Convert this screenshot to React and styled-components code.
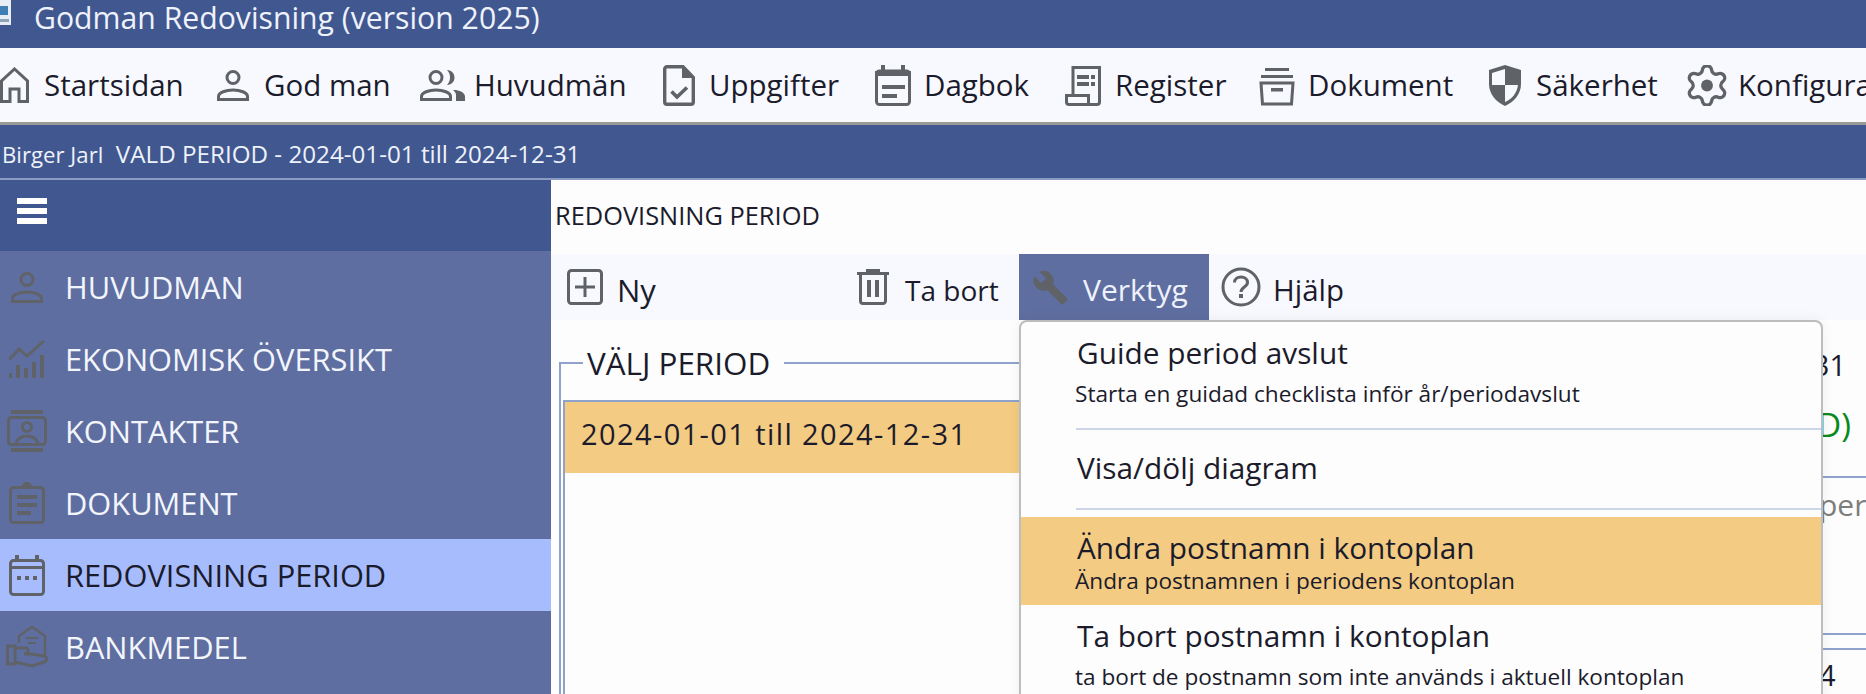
import React from "react";
import styled, { createGlobalStyle } from "styled-components";

const GlobalStyle = createGlobalStyle`
  html, body {
    margin: 0;
    padding: 0;
    background: #fdfdfd;
    overflow: hidden;
  }
  * { box-sizing: border-box; }
`;

const Page = styled.div`
  width: 1866px;
  height: 694px;
  overflow: hidden;
  font-family: "Open Sans", "Liberation Sans", sans-serif;
  color: #1b1b2b;
`;

const TitleBar = styled.div`
  height: 48px;
  background: #41578f;
  color: #eef2fb;
  display: flex;
  align-items: flex-start;
  font-size: 30.2px;
  line-height: 36px;
  white-space: nowrap;
`;

const AppLogo = styled.svg`
  width: 11px;
  height: 25px;
  margin-right: 23px;
  flex: none;
`;

const Toolbar = styled.nav`
  height: 77px;
  background: #f8f9ff;
  border-bottom: 3px solid #9a9a98;
  display: grid;
  grid-template-columns: 217px 203px 243px 212px 190px 194px 230px 198px 200px;
  align-items: center;
  overflow: hidden;
`;

const ToolItem = styled.div`
  display: flex;
  align-items: center;
  gap: ${(p) => p.$gap}px;
  font-size: 29.5px;
  white-space: nowrap;
  svg { flex: none; }
`;

const ToolLabel = styled.span`
  margin-top: -2px;
`;

const Banner = styled.div`
  height: 55px;
  background: #41578f;
  border-bottom: 2px solid #8a9cc4;
  color: #eef2fb;
  font-size: 24.2px;
  line-height: 57px;
  padding-left: 2px;
  white-space: pre;
`;

const BannerName = styled.span`
  font-size: 22.2px;
`;

const Body = styled.div`
  display: flex;
  height: 514px;
`;

const Sidebar = styled.aside`
  width: 551px;
  flex: none;
  background: #5f6ea0;
`;

const SideHead = styled.div`
  height: 71px;
  background: #41578f;
  padding: 18px 0 0 17px;
`;

const Burger = styled.div`
  width: 30px;
  display: grid;
  gap: 4px;
  span {
    display: block;
    height: 6px;
    background: #fff;
  }
`;

const SideItem = styled.div`
  height: 72px;
  display: grid;
  grid-template-columns: 54px 1fr;
  column-gap: 11px;
  align-items: center;
  justify-items: start;
  font-size: 30.8px;
  line-height: 68px;
  background: ${(p) => (p.$active ? "#a7bcfd" : "transparent")};
  color: ${(p) => (p.$active ? "#1b1b2b" : "#f2f5fc")};
  svg { justify-self: center; }
`;

const Main = styled.main`
  flex: 1;
  min-width: 0;
  background: #fdfdfd;
`;

const MainTitle = styled.div`
  height: 74px;
  padding-left: 4px;
  font-size: 25.4px;
  line-height: 70px;
`;

const ActionBar = styled.div`
  height: 66px;
  background: #f8f9ff;
  display: flex;
  align-items: stretch;
  padding-left: 16px;
`;

const ActionButton = styled.div`
  position: relative;
  width: ${(p) => p.$width}px;
  margin-left: ${(p) => p.$offset || 0}px;
  padding-left: ${(p) => p.$pad || 0}px;
  display: flex;
  align-items: center;
  gap: ${(p) => p.$gap}px;
  font-size: ${(p) => p.$size}px;
  white-space: nowrap;
  background: ${(p) => (p.$open ? "#5f6ea0" : "transparent")};
  color: ${(p) => (p.$open ? "#eef2fb" : "#1b1b2b")};
`;

const ActionLabel = styled.span`
  margin-top: 5px;
`;

const Content = styled.div`
  height: 374px;
  display: flex;
  justify-content: space-between;
  overflow: hidden;
`;

const PeriodField = styled.fieldset`
  width: 1040px;
  height: 420px;
  margin: 24px 0 0 8px;
  padding: 0 0 0 2px;
  border: 2px solid #8fa2cc;
  border-bottom: none;
  border-right: none;
  min-width: 0;
`;

const PeriodLegend = styled.legend`
  margin-left: 20px;
  padding: 0 14px 0 4px;
  font-size: 31.4px;
  line-height: 38px;
`;

const PeriodList = styled.div`
  margin-top: 18px;
  height: 300px;
  border: 2px solid #8fa2cc;
  border-bottom: none;
  border-right: none;
`;

const PeriodRow = styled.div`
  height: 71px;
  background: #f3cb82;
  padding-left: 16px;
  font-size: 29px;
  letter-spacing: 1.4px;
  line-height: 64px;
  white-space: nowrap;
`;

const SidePanel = styled.div`
  width: 160px;
  flex: none;
  padding-top: 24px;
`;

const PanelText = styled.div`
  height: ${(p) => p.$height}px;
  display: flex;
  align-items: center;
  justify-content: ${(p) => (p.$left ? "flex-start" : "flex-end")};
  padding: ${(p) => (p.$left ? "0 0 0 113px" : `0 ${p.$right || 20}px 0 0`)};
  font-size: ${(p) => p.$size || 29}px;
  white-space: nowrap;
  color: ${(p) => p.$color || "#1b1b2b"};
`;

const PanelLine = styled.div`
  height: 2px;
  margin-top: ${(p) => p.$top}px;
  background: #8fa2cc;
`;

const Menu = styled.div`
  position: absolute;
  top: 100%;
  left: 0;
  width: 804px;
  height: 400px;
  background: #fdfdfd;
  border: 2.5px solid #bdbdbd;
  border-radius: 8px 8px 0 0;
  box-shadow: 0 0 14px rgba(0, 0, 0, 0.06);
  color: #1b1b2b;
  z-index: 5;
`;

const MenuItem = styled.div`
  height: ${(p) => p.$height}px;
  margin-top: ${(p) => p.$gap || 0}px;
  padding: ${(p) => p.$top}px 0 0 56px;
  background: ${(p) => (p.$active ? "#f3cb82" : "transparent")};
  white-space: nowrap;
`;

const MenuTitle = styled.div`
  font-size: 29.8px;
  line-height: 38px;
`;

const MenuSub = styled.div`
  margin: ${(p) => (p.$tight ? "0" : "6px")} 0 0 -2px;
  font-size: 22.6px;
  line-height: ${(p) => (p.$tight ? "28px" : "32px")};
`;

const MenuRule = styled.div`
  height: 2px;
  margin-left: 55px;
  background: #cdd6e9;
`;

const G = "#5f6368";

const line = { fill: "none", stroke: G, strokeWidth: 3 };

const HomeIcon = () => (
  <svg width="29" height="36" viewBox="0 0 29 36">
    <path {...line} d="M1.5 34.5V14L14.5 2 27.5 14V34.5H19V22H10V34.5Z" />
  </svg>
);

const UserIcon = () => (
  <svg width="32" height="32" viewBox="0 0 32 32">
    <circle {...line} cx="16" cy="8.5" r="6" />
    <path {...line} d="M1.5 30.5V27.5C1.5 23.5 9 21 16 21S30.5 23.5 30.5 27.5V30.5Z" />
  </svg>
);

const UsersIcon = () => (
  <svg width="45" height="32" viewBox="0 0 45 32">
    <circle {...line} cx="16" cy="8.5" r="6" />
    <path {...line} d="M1.5 30.5V27.5C1.5 23.5 9 21 16 21S30.5 23.5 30.5 27.5V30.5Z" />
    <path fill={G} d="M27 1C32 1 34.5 5 34.5 8.5S32 16 27 16C29.5 13 30 11 30 8.5S29.5 3.5 27 1Z" />
    <path fill={G} d="M36 21C41 22 45 24 45 27.5V32H36V26C36 24.5 35 22.5 33 21Z" />
  </svg>
);

const TaskIcon = () => (
  <svg width="32" height="41" viewBox="0 0 32 41">
    <path {...line} strokeWidth="3.4" d="M4 1.7H20L30.3 12.5V37A2.3 2.3 0 0 1 28 39.3H4A2.3 2.3 0 0 1 1.7 37V4A2.3 2.3 0 0 1 4 1.7Z" />
    <path fill={G} d="M19 2L31 13H19Z" />
    <path {...line} strokeWidth="3.6" d="M8.5 26.5L14 32 24 22.5" />
  </svg>
);

const DiaryIcon = () => (
  <svg width="36" height="41" viewBox="0 0 36 41">
    <path fill={G} d="M6 0H10V6H26V0H30V6H36V11H0V6H6Z" />
    <rect {...line} x="1.5" y="6" width="33" height="33.5" rx="3" />
    <rect fill={G} x="7" y="20" width="23" height="4" />
    <rect fill={G} x="7" y="29" width="15" height="4" />
  </svg>
);

const RegisterIcon = () => (
  <svg width="36" height="41" viewBox="0 0 36 41">
    <path {...line} d="M8 30V2.5H34.5V37A2.5 2.5 0 0 1 32 39.5H24" />
    <path {...line} d="M1.5 30.5H23.5V39.5H4A2.5 2.5 0 0 1 1.5 37Z" />
    <rect fill={G} x="12" y="10" width="12" height="4" />
    <rect fill={G} x="12" y="17" width="12" height="4" />
    <rect fill={G} x="26" y="10" width="4" height="4" />
    <rect fill={G} x="26" y="17" width="4" height="4" />
  </svg>
);

const ArchiveIcon = () => (
  <svg width="36" height="41" viewBox="0 0 36 41">
    <rect fill={G} x="6" y="3" width="24" height="3" />
    <rect fill={G} x="2" y="10" width="32" height="3" />
    <path {...line} d="M2 18H34L32.5 39H3.5Z" />
    <rect fill={G} x="12" y="23" width="12" height="3.5" />
  </svg>
);

const ShieldIcon = () => (
  <svg width="32" height="41" viewBox="0 0 32 41">
    <path fill={G} d="M16 0L32 5V19C32 29 25 37 16 41 7 37 0 29 0 19V5Z" />
    <path fill="#f8f9ff" d="M16 4L3 8V20H16Z" />
    <path fill="#f8f9ff" d="M16 20H29C28 28 23 34 16 37Z" />
  </svg>
);

const GearIcon = () => (
  <svg width="40" height="41" viewBox="2.4 1.6 19.2 20.8">
    <path
      fill="none"
      stroke={G}
      strokeWidth="1.7"
      d="M9.671 4.136a2.34 2.34 0 0 1 4.659 0 2.34 2.34 0 0 0 3.319 1.915 2.34 2.34 0 0 1 2.33 4.033 2.34 2.34 0 0 0 0 3.831 2.34 2.34 0 0 1-2.33 4.033 2.34 2.34 0 0 0-3.319 1.915 2.34 2.34 0 0 1-4.659 0 2.34 2.34 0 0 0-3.32-1.915 2.34 2.34 0 0 1-2.33-4.033 2.34 2.34 0 0 0 0-3.831A2.34 2.34 0 0 1 6.35 6.051a2.34 2.34 0 0 0 3.32-1.915"
    />
    <circle fill={G} cx="12" cy="12" r="3" />
  </svg>
);

const ChartIcon = () => (
  <svg width="36" height="38" viewBox="0 0 36 38">
    <path {...line} d="M0 20L10 9 18 16 35 1" />
    <rect fill={G} x="0" y="33" width="3" height="5" />
    <rect fill={G} x="7" y="25" width="4" height="13" />
    <rect fill={G} x="15" y="28" width="4" height="10" />
    <rect fill={G} x="23" y="22" width="4" height="16" />
    <rect fill={G} x="31" y="15" width="4" height="23" />
  </svg>
);

const ContactIcon = () => (
  <svg width="40" height="42" viewBox="0 0 40 42">
    <rect fill={G} x="4" y="0" width="32" height="4" />
    <rect fill={G} x="4" y="38" width="32" height="4" />
    <rect {...line} x="1.5" y="7.5" width="37" height="27" rx="3" />
    <circle {...line} cx="20" cy="17" r="4.5" />
    <path {...line} d="M9 33C11 28 15 26 20 26S29 28 31 33" />
  </svg>
);

const ClipIcon = () => (
  <svg width="36" height="42" viewBox="0 0 36 42">
    <rect {...line} x="1.5" y="5.5" width="33" height="35" rx="3" />
    <path fill={G} d="M13 6C13 2 15 0 18 0S23 2 23 6Z" />
    <rect fill={G} x="8" y="13" width="20" height="4" />
    <rect fill={G} x="8" y="21" width="20" height="4" />
    <rect fill={G} x="8" y="29" width="14" height="4" />
  </svg>
);

const CalendarIcon = () => (
  <svg width="36" height="41" viewBox="0 0 36 41">
    <rect fill={G} x="6" y="0" width="4" height="6" />
    <rect fill={G} x="26" y="0" width="4" height="6" />
    <rect {...line} x="1.5" y="5.5" width="33" height="34" rx="3" />
    <rect fill={G} x="1.5" y="11" width="33" height="3" />
    <rect fill={G} x="8" y="21" width="4" height="4" />
    <rect fill={G} x="16" y="21" width="4" height="4" />
    <rect fill={G} x="24" y="21" width="4" height="4" />
  </svg>
);

const HandIcon = () => (
  <svg width="42" height="42" viewBox="0 0 42 42">
    <path fill="none" stroke={G} strokeWidth="2.5" d="M13 17V10L26 1 39 10V30" />
    <rect fill={G} x="20" y="11" width="12" height="2" />
    <rect fill={G} x="22" y="16" width="8" height="2" />
    <path {...line} d="M1.5 20H9V38H1.5Z" />
    <path {...line} d="M9 22H20C23 22 23 28 18 28H25L38 30C42 32 41 35 38 36L26 40 9 36" />
  </svg>
);

const PlusIcon = () => (
  <svg width="36" height="36" viewBox="0 0 36 36">
    <rect {...line} x="1.5" y="1.5" width="33" height="33" rx="3" />
    <path {...line} d="M18 8V28M8 18H28" />
  </svg>
);

const TrashIcon = () => (
  <svg width="32" height="36" viewBox="0 0 32 36">
    <rect fill={G} x="0" y="3" width="32" height="3" />
    <rect fill={G} x="9" y="0" width="14" height="3" />
    <path {...line} d="M3.5 5V32A2.5 2.5 0 0 0 6 34.5H26A2.5 2.5 0 0 0 28.5 32V5" />
    <rect fill={G} x="10" y="11" width="4" height="17" />
    <rect fill={G} x="18" y="11" width="4" height="17" />
  </svg>
);

const WrenchIcon = () => (
  <svg width="37" height="37" viewBox="0 0 24 24">
    <path
      fill={G}
      d="M22.7 19l-9.1-9.1c.9-2.3.4-5-1.5-6.9-2-2-5-2.4-7.4-1.3L9 6 6 9 1.6 4.7C.4 7.1.9 10.1 2.9 12.1c1.9 1.9 4.6 2.4 6.9 1.5l9.1 9.1c.4.4 1 .4 1.4 0l2.3-2.3c.5-.4.5-1.1.1-1.4z"
    />
  </svg>
);

const HelpIcon = () => (
  <svg width="40" height="40" viewBox="0 0 40 40">
    <circle {...line} cx="20" cy="20" r="18" />
    <path {...line} d="M13.5 15.5C13.5 12 16.5 10 20 10S26.5 12 26.5 15.5C26.5 20 20 20 20 25" />
    <rect fill={G} x="18" y="27" width="4" height="4" />
  </svg>
);

const toolItems = [
  { label: "Startsidan", icon: <HomeIcon />, gap: 15 },
  { label: "God man", icon: <UserIcon />, gap: 15 },
  { label: "Huvudmän", icon: <UsersIcon />, gap: 9 },
  { label: "Uppgifter", icon: <TaskIcon />, gap: 14 },
  { label: "Dagbok", icon: <DiaryIcon />, gap: 13 },
  { label: "Register", icon: <RegisterIcon />, gap: 14 },
  { label: "Dokument", icon: <ArchiveIcon />, gap: 13 },
  { label: "Säkerhet", icon: <ShieldIcon />, gap: 15 },
  { label: "Konfiguration", icon: <GearIcon />, gap: 11 },
];

const sideItems = [
  { label: "HUVUDMAN", icon: <UserIcon /> },
  { label: "EKONOMISK ÖVERSIKT", icon: <ChartIcon /> },
  { label: "KONTAKTER", icon: <ContactIcon /> },
  { label: "DOKUMENT", icon: <ClipIcon /> },
  { label: "REDOVISNING PERIOD", icon: <CalendarIcon />, active: true },
  { label: "BANKMEDEL", icon: <HandIcon /> },
];

const App = () => {
  return (
    <Page>
      <GlobalStyle />
      <TitleBar>
        <AppLogo viewBox="0 0 11 25">
          <rect width="11" height="25" fill="#e8edf3" />
          <rect x="0" y="6" width="8" height="9" fill="#3f7fb5" />
          <rect x="0" y="19" width="9" height="3" fill="#8fa4b8" />
        </AppLogo>
        Godman Redovisning (version 2025)
      </TitleBar>

      <Toolbar>
        {toolItems.map((item) => (
          <ToolItem key={item.label} $gap={item.gap}>
            {item.icon}
            <ToolLabel>{item.label}</ToolLabel>
          </ToolItem>
        ))}
      </Toolbar>

      <Banner>
        <BannerName>Birger Jarl</BannerName>  VALD PERIOD - 2024-01-01 till 2024-12-31
      </Banner>

      <Body>
        <Sidebar>
          <SideHead>
            <Burger>
              <span />
              <span />
              <span />
            </Burger>
          </SideHead>
          {sideItems.map((item) => (
            <SideItem key={item.label} $active={item.active}>
              {item.icon}
              {item.label}
            </SideItem>
          ))}
        </Sidebar>

        <Main>
          <MainTitle>REDOVISNING PERIOD</MainTitle>
          <ActionBar>
            <ActionButton $width={290} $gap={14} $size={31}>
              <PlusIcon />
              <ActionLabel>Ny</ActionLabel>
            </ActionButton>
            <ActionButton $width={162} $gap={16} $size={28}>
              <TrashIcon />
              <ActionLabel>Ta bort</ActionLabel>
            </ActionButton>
            <ActionButton $width={190} $pad={13} $gap={14} $size={30} $open>
              <WrenchIcon />
              <ActionLabel>Verktyg</ActionLabel>
              <Menu>
                <MenuItem $height={106} $top={12}>
                  <MenuTitle>Guide period avslut</MenuTitle>
                  <MenuSub>Starta en guidad checklista inför år/periodavslut</MenuSub>
                </MenuItem>
                <MenuRule />
                <MenuItem $height={78} $top={19}>
                  <MenuTitle>Visa/dölj diagram</MenuTitle>
                </MenuItem>
                <MenuRule />
                <MenuItem $height={88} $top={12} $gap={7} $active>
                  <MenuTitle>Ändra postnamn i kontoplan</MenuTitle>
                  <MenuSub $tight>Ändra postnamnen i periodens kontoplan</MenuSub>
                </MenuItem>
                <MenuItem $height={100} $top={12}>
                  <MenuTitle>Ta bort postnamn i kontoplan</MenuTitle>
                  <MenuSub>ta bort de postnamn som inte används i aktuell kontoplan</MenuSub>
                </MenuItem>
              </Menu>
            </ActionButton>
            <ActionButton $width={140} $offset={12} $gap={12} $size={29.5}>
              <HelpIcon />
              <ActionLabel>Hjälp</ActionLabel>
            </ActionButton>
          </ActionBar>

          <Content>
            <PeriodField>
              <PeriodLegend>VÄLJ PERIOD</PeriodLegend>
              <PeriodList>
                <PeriodRow>2024-01-01 till 2024-12-31</PeriodRow>
              </PeriodList>
            </PeriodField>

            <SidePanel>
              <PanelText $height={40}>2024-12-31</PanelText>
              <PanelText $height={80} $size={33} $right={15} $color="#0a8a1a">D)</PanelText>
              <PanelLine $top={12} />
              <PanelText $height={52} $left $size={30} $color="#7d7d7d">per</PanelText>
              <PanelLine $top={103} />
              <PanelLine $top={13} />
              <PanelText $height={48} $left>4</PanelText>
            </SidePanel>
          </Content>
        </Main>
      </Body>
    </Page>
  );
};

export default App;
